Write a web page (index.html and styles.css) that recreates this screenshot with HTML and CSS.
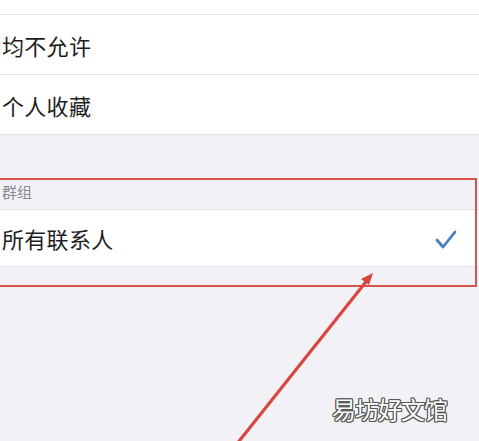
FILE: index.html
```html
<!DOCTYPE html>
<html lang="zh">
<head>
<meta charset="utf-8">
<link rel="stylesheet" href="styles.css">
</head>
<body>
<div class="page">
  <div class="row row-top"></div>
  <div class="row"><span class="label">均不允许</span></div>
  <div class="row"><span class="label">个人收藏</span></div>
  <div class="gap"></div>
  <div class="group">
    <div class="group-head">群组</div>
    <div class="row row-check">
      <span class="label">所有联系人</span>
      <svg class="check" width="22" height="19" viewBox="0 0 22 19"><path d="M2 10 L8 17 L20 2" fill="none" stroke="#4a7ec2" stroke-width="2.8" stroke-linecap="round" stroke-linejoin="round"/></svg>
    </div>
    <div class="group-foot"></div>
  </div>
  <div class="highlight"></div>
  <svg class="arrow" width="479" height="441" viewBox="0 0 479 441">
    <line x1="236" y1="445" x2="369" y2="278" stroke="#d9463f" stroke-width="3.2"/>
    <path d="M373 273 L361 279 L369 285 Z" fill="#d9463f"/>
  </svg>
  <div class="watermark">易坊好文馆</div>
</div>
</body>
</html>
```
FILE: styles.css
```css
html, body {
  margin: 0;
  padding: 0;
}
body {
  background: #f2f2f6;
  font-family: "Noto Sans CJK SC", "Noto Sans", sans-serif;
  width: 479px;
  height: 441px;
  overflow: hidden;
}
.page {
  position: relative;
  width: 479px;
  height: 441px;
}
.row {
  background: #fff;
  height: 59px;
  display: flex;
  align-items: center;
  padding-left: 2px;
  border-bottom: 1px solid #e4e4e8;
}
.row-top {
  height: 14px;
}
.label {
  font-size: 22px;
  color: #1e1e1e;
  letter-spacing: 0.3px;
}
.gap {
  height: 43px;
}
.group-head {
  height: 32px;
  padding-left: 2px;
  padding-top: 3px;
  box-sizing: border-box;
  font-size: 15px;
  color: #8a8a8e;
  line-height: 22px;
  border-bottom: 1px solid #e2e2e6;
}
.row-check {
  height: 56px;
  justify-content: space-between;
  padding-right: 22px;
}
.group-foot {
  height: 18px;
}
.check {
  margin-top: 2px;
}
.highlight {
  position: absolute;
  left: -4px;
  top: 178px;
  width: 477px;
  height: 105px;
  border: 2px solid #d9534f;
  box-sizing: content-box;
}
.arrow {
  position: absolute;
  left: 0;
  top: 0;
}
.watermark {
  position: absolute;
  left: 332px;
  top: 391px;
  font-size: 24px;
  color: #fff;
  letter-spacing: -1px;
  text-shadow: -1px -1px 0 #555, 1px -1px 0 #555, -1px 1px 0 #555, 1px 1px 0 #555, 0 1px 0 #555, 0 -1px 0 #555, 1px 0 0 #555, -1px 0 0 #555;
}
```
